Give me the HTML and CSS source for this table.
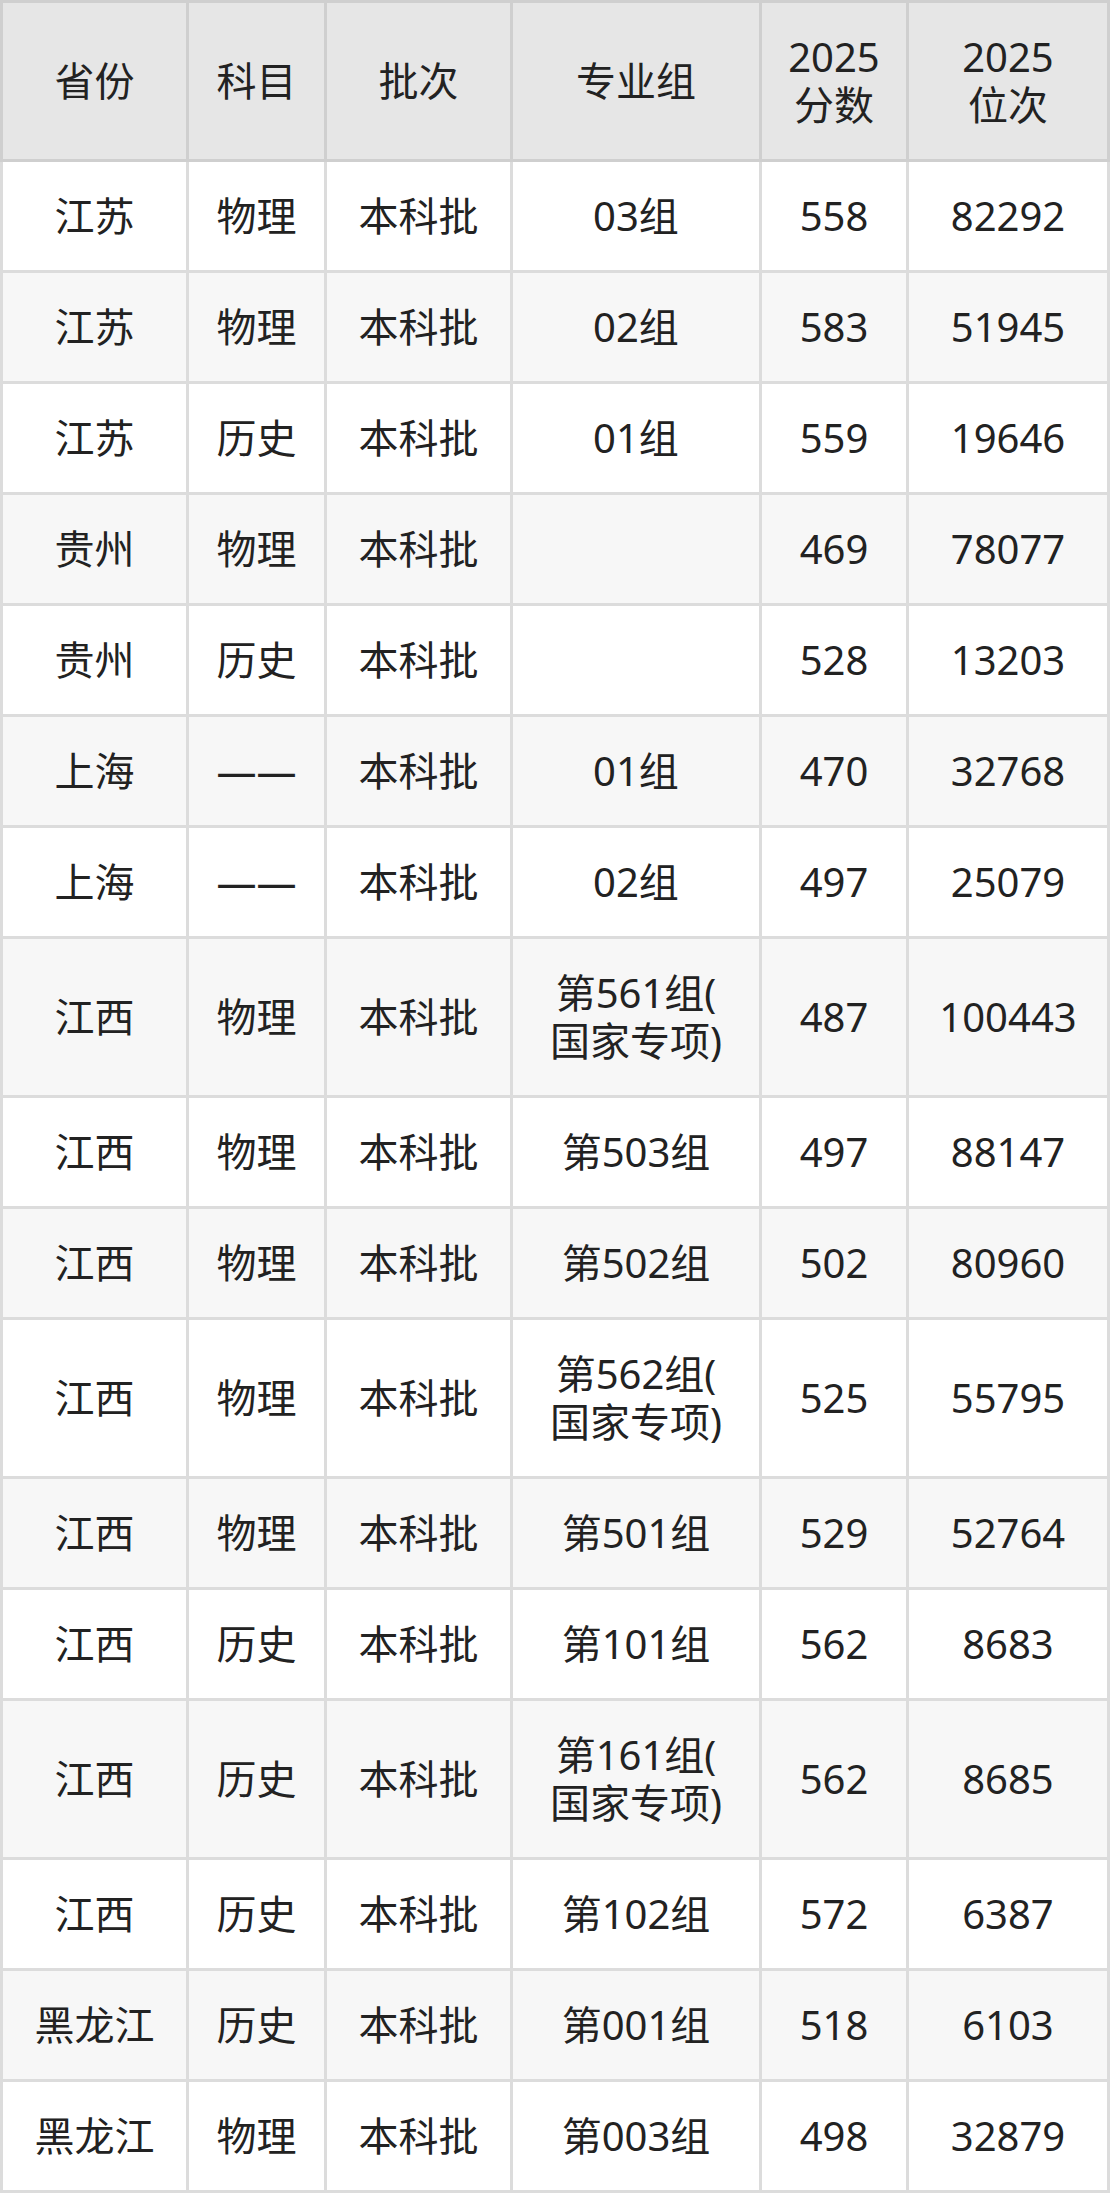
FILE: index.html
```html
<!DOCTYPE html>
<html lang="zh-CN">
<head>
<meta charset="utf-8">
<title>分数线</title>
<link rel="stylesheet" href="styles.css">
</head>
<body>
<table class="score-table">
  <colgroup>
    <col class="c1"><col class="c2"><col class="c3"><col class="c4"><col class="c5"><col class="c6">
  </colgroup>
  <thead>
    <tr><th>省份</th><th>科目</th><th>批次</th><th>专业组</th><th>2025<br>分数</th><th>2025<br>位次</th></tr>
  </thead>
  <tbody>
    <tr><td>江苏</td><td>物理</td><td>本科批</td><td>03组</td><td>558</td><td>82292</td></tr>
    <tr><td>江苏</td><td>物理</td><td>本科批</td><td>02组</td><td>583</td><td>51945</td></tr>
    <tr><td>江苏</td><td>历史</td><td>本科批</td><td>01组</td><td>559</td><td>19646</td></tr>
    <tr><td>贵州</td><td>物理</td><td>本科批</td><td></td><td>469</td><td>78077</td></tr>
    <tr><td>贵州</td><td>历史</td><td>本科批</td><td></td><td>528</td><td>13203</td></tr>
    <tr><td>上海</td><td>——</td><td>本科批</td><td>01组</td><td>470</td><td>32768</td></tr>
    <tr><td>上海</td><td>——</td><td>本科批</td><td>02组</td><td>497</td><td>25079</td></tr>
    <tr><td>江西</td><td>物理</td><td>本科批</td><td>第561组(<br>国家专项)</td><td>487</td><td>100443</td></tr>
    <tr><td>江西</td><td>物理</td><td>本科批</td><td>第503组</td><td>497</td><td>88147</td></tr>
    <tr><td>江西</td><td>物理</td><td>本科批</td><td>第502组</td><td>502</td><td>80960</td></tr>
    <tr><td>江西</td><td>物理</td><td>本科批</td><td>第562组(<br>国家专项)</td><td>525</td><td>55795</td></tr>
    <tr><td>江西</td><td>物理</td><td>本科批</td><td>第501组</td><td>529</td><td>52764</td></tr>
    <tr><td>江西</td><td>历史</td><td>本科批</td><td>第101组</td><td>562</td><td>8683</td></tr>
    <tr><td>江西</td><td>历史</td><td>本科批</td><td>第161组(<br>国家专项)</td><td>562</td><td>8685</td></tr>
    <tr><td>江西</td><td>历史</td><td>本科批</td><td>第102组</td><td>572</td><td>6387</td></tr>
    <tr><td>黑龙江</td><td>历史</td><td>本科批</td><td>第001组</td><td>518</td><td>6103</td></tr>
    <tr><td>黑龙江</td><td>物理</td><td>本科批</td><td>第003组</td><td>498</td><td>32879</td></tr>
  </tbody>
</table>
</body>
</html>
```

FILE: styles.css
```css
html, body {
  margin: 0;
  padding: 0;
  background: #ffffff;
}

.score-table {
  width: 1110px;
  table-layout: fixed;
  border-collapse: collapse;
  font-family: "Noto Sans", "Noto Sans CJK SC", sans-serif;
  font-size: 40px;
  line-height: 48px;
  color: #222222;
  border: 3px solid #d6d6d6;
}

.c1 { width: 186px; }
.c2 { width: 138px; }
.c3 { width: 186px; }
.c4 { width: 249px; }
.c5 { width: 147px; }
.c6 { width: 201px; }

.score-table th,
.score-table td {
  padding: 30px 0;
  text-align: center;
  vertical-align: middle;
  border: 3px solid #dcdcdc;
  font-weight: normal;
  white-space: nowrap;
}

.score-table th {
  background: #e6e6e6;
  border-color: #cfcfcf;
}

.score-table tbody tr:nth-child(even) td {
  background: #f7f7f7;
}
```
